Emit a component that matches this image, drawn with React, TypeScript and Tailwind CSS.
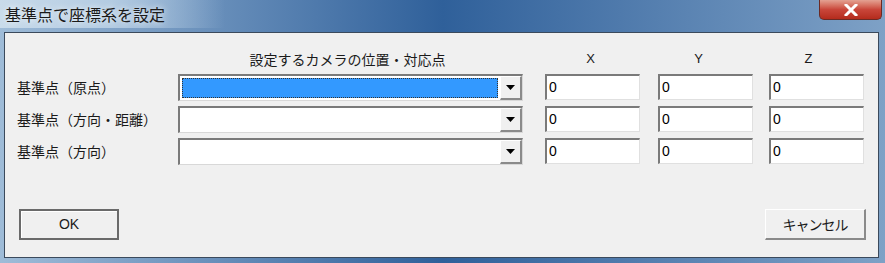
import React from 'react'

const jp = { fontFamily: '"Noto Sans CJK JP", "Noto Sans", sans-serif' }
const latin = { fontFamily: '"Liberation Sans", sans-serif' }

const rows = ['基準点（原点）', '基準点（方向・距離）', '基準点（方向）']

function Combo({ selected }: { selected?: boolean }) {
  return (
    <div className="flex h-[27px] w-[345px] border-t-2 border-l-2 border-t-[#7a7a7a] border-l-[#7a7a7a] border-r border-b border-r-[#d8d8d8] border-b-[#d8d8d8] bg-white">
      <div className="flex-1 p-[2px]">
        {selected && (
          <div className="h-full w-full bg-[#3399ff] outline-1 outline-dotted outline-[#333] -outline-offset-1" />
        )}
      </div>
      <div className="flex w-[22px] items-center justify-center border-r-2 border-b-2 border-r-[#8a8a8a] border-b-[#8a8a8a] border-t border-l border-t-white border-l-white bg-[#f0f0f0]">
        <svg width="9" height="5" viewBox="0 0 9 5">
          <path d="M0 0 H9 L4.5 5 Z" fill="#000" />
        </svg>
      </div>
    </div>
  )
}

function NumBox() {
  return (
    <div
      className="flex h-[26px] w-[95px] items-center border-t-2 border-l-2 border-t-[#7a7a7a] border-l-[#7a7a7a] border-r border-b border-r-[#e0e0e0] border-b-[#e0e0e0] bg-white pl-[2px] text-[14px] text-black"
      style={latin}
    >
      0
    </div>
  )
}

export default function App() {
  return (
    <div
      className="relative h-[263px] w-[885px] overflow-hidden bg-gradient-to-r from-[#9fbcd8] via-[#2f609a] to-[#7ea1c6]"
      style={jp}
    >
      {/* title bar */}
      <div className="flex h-[32px] items-start justify-between">
        <div className="flex h-[28px] items-center bg-gradient-to-r from-[#c9dbea] via-[#b3cbe2] to-transparent pl-[5px] pr-[60px] text-[16px] text-[#1a1a1a] [text-shadow:0_0_6px_#ffffff]">
          基準点で座標系を設定
        </div>
        <div className="mr-[3px] flex h-[20px] w-[63px] items-center justify-center rounded-b-[5px] border border-t-0 border-[#6b2a24] bg-gradient-to-b from-[#e3a192] via-[#c9463a] to-[#b42b1c]">
          <svg width="14" height="12" viewBox="0 0 14 12">
            <path d="M2 1 L12 11 M12 1 L2 11" stroke="#fff" strokeWidth="3" strokeLinecap="square" />
          </svg>
        </div>
      </div>

      {/* client area */}
      <div className="ml-[4px] h-[226px] w-[875px] border border-[#3b4a5c] bg-[#f0f0f0] pl-[12px] pt-[16px] text-[#1a1a1a]">
        <div className="grid grid-cols-[143px_345px_95px_95px_95px] gap-x-[18px] gap-y-[5px]">
          <div />
          <div className="-ml-[6px] text-center text-[14px] leading-[20px]">設定するカメラの位置・対応点</div>
          <div className="ml-[4px] text-center text-[13px] leading-[20px]" style={latin}>X</div>
          <div className="-ml-[6px] text-center text-[13px] leading-[20px]" style={latin}>Y</div>
          <div className="-ml-[12px] text-center text-[13px] leading-[20px]" style={latin}>Z</div>
          {rows.map((r, i) => (
            <React.Fragment key={r}>
              <div className="flex h-[27px] items-center whitespace-nowrap text-[14px]">{r}</div>
              <Combo selected={i === 0} />
              <div className="ml-[4px]"><NumBox /></div>
              <div className="ml-[4px]"><NumBox /></div>
              <div className="ml-[2px]"><NumBox /></div>
            </React.Fragment>
          ))}
        </div>

        <div className="mt-[44px] flex items-center justify-between pr-[12px]">
          <button className="ml-[2px] h-[31px] w-[100px] border-2 border-[#6a6a6a] bg-[#f0f0f0] text-[14px] text-[#1a1a1a] shadow-[inset_1px_1px_0_#ffffff]" style={latin}>
            OK
          </button>
          <button className="h-[31px] w-[101px] border-t border-l border-t-white border-l-white border-r-2 border-b-2 border-r-[#8a8a8a] border-b-[#8a8a8a] bg-[#f0f0f0] text-[14px] tracking-[-1px] text-[#1a1a1a]">
            キャンセル
          </button>
        </div>
      </div>
    </div>
  )
}
